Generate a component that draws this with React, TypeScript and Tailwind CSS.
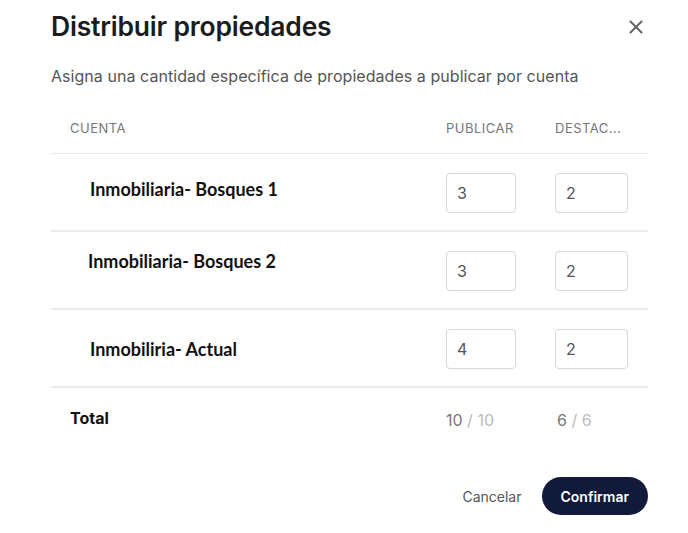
import { X } from "lucide-react"

const rows = [
  { id: 1, name: "Inmobiliaria- Bosques 1", publicar: 3, destacar: 2, nameClass: "pl-[39px] pb-[6px]" },
  { id: 2, name: "Inmobiliaria- Bosques 2", publicar: 3, destacar: 2, nameClass: "pl-[37px] pb-[18px]" },
  { id: 3, name: "Inmobiliria- Actual", publicar: 4, destacar: 2, nameClass: "pl-[39px] pt-[2px]" },
]

export default function App() {
  return (
    <div className="w-[688px] h-[533px] bg-white font-['Inter',sans-serif] text-[#1a1a1a]">
      <div className="px-[51px] pt-[9px] pr-[40px]">
        <div className="flex items-center justify-between">
          <h2 className="text-[26.5px] font-semibold leading-[34px] tracking-[-0.2px] text-[#1c1c1c]">
            Distribuir propiedades
          </h2>
          <button className="text-[#666] mt-[2px] mr-[1px]">
            <X size={22} strokeWidth={2.2} />
          </button>
        </div>
        <p className="mt-[23px] text-[16px] leading-5 tracking-[0.05px] text-[#555]">
          Asigna una cantidad específica de propiedades a publicar por cuenta
        </p>
      </div>

      <div className="mx-[51px] mt-[23px] w-[597px]">
        <div className="grid grid-cols-[395px_109px_93px] h-[45px] items-center border-b border-[#e8e8e8] text-[13px] text-[#777] tracking-[0.5px]">
          <div className="pl-[19px] pb-[4px]">CUENTA</div>
          <div className="pb-[4px]">PUBLICAR</div>
          <div className="pb-[4px]">DESTAC...</div>
        </div>

        {rows.map((row) => (
          <div
            key={row.id}
            className="grid grid-cols-[395px_109px_93px] h-[78px] items-center border-b-2 border-[#ededed]"
          >
            <div className={`font-['Lato',sans-serif] font-bold text-[18px] text-[#111] ${row.nameClass}`}>
              {row.name}
            </div>
            <div className="pt-[1px]">
              <input
                readOnly
                value={row.publicar}
                className="w-[70px] h-[40px] rounded-[4px] border border-[#d6d6d6] px-[10px] text-[16px] text-[#555] outline-none"
              />
            </div>
            <div className="pt-[1px]">
              <input
                readOnly
                value={row.destacar}
                className="w-[73px] h-[40px] rounded-[4px] border border-[#d6d6d6] px-[10px] text-[16px] text-[#555] outline-none"
              />
            </div>
          </div>
        ))}

        <div className="grid grid-cols-[395px_109px_93px] h-[60px] items-center text-[16px]">
          <div className="pl-[19px] font-bold text-[16px] text-[#111]">Total</div>
          <div className="pt-[4px] text-[#777]">
            10 <span className="text-[#bbb]">/ 10</span>
          </div>
          <div className="pl-[2px] pt-[4px] text-[#777]">
            6 <span className="text-[#bbb]">/ 6</span>
          </div>
        </div>
      </div>

      <div className="mt-[29px] mr-[40px] flex justify-end items-center gap-[20px]">
        <button className="text-[14px] text-[#555]">Cancelar</button>
        <button className="h-[38px] px-[19px] rounded-full bg-[#111a3a] text-white text-[14px] font-semibold">
          Confirmar
        </button>
      </div>
    </div>
  )
}
